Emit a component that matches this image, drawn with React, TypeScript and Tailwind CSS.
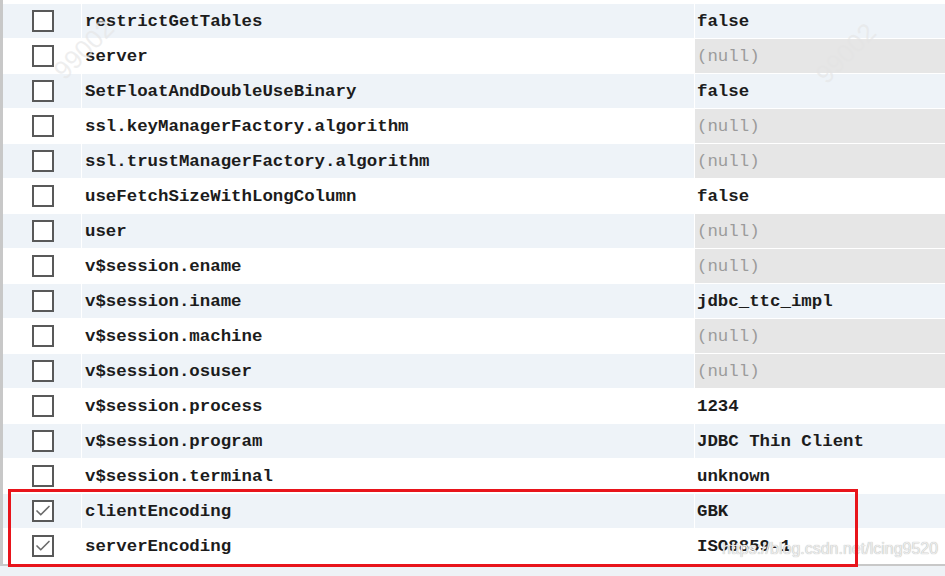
import { Check } from "lucide-react";

interface Prop {
  name: string;
  value: string | null;
  checked?: boolean;
}

const props: Prop[] = [
  { name: "restrictGetTables", value: "false" },
  { name: "server", value: null },
  { name: "SetFloatAndDoubleUseBinary", value: "false" },
  { name: "ssl.keyManagerFactory.algorithm", value: null },
  { name: "ssl.trustManagerFactory.algorithm", value: null },
  { name: "useFetchSizeWithLongColumn", value: "false" },
  { name: "user", value: null },
  { name: "v$session.ename", value: null },
  { name: "v$session.iname", value: "jdbc_ttc_impl" },
  { name: "v$session.machine", value: null },
  { name: "v$session.osuser", value: null },
  { name: "v$session.process", value: "1234" },
  { name: "v$session.program", value: "JDBC Thin Client" },
  { name: "v$session.terminal", value: "unknown" },
  { name: "clientEncoding", value: "GBK", checked: true },
  { name: "serverEncoding", value: "ISO8859-1", checked: true },
];

const mono = { fontFamily: '"Liberation Mono", "DejaVu Sans Mono", monospace' };

function Checkbox({ checked }: { checked?: boolean }) {
  return (
    <div className="w-[22px] h-[22px] border-2 border-[#595959] bg-white flex items-center justify-center">
      {checked && <Check size={18} strokeWidth={2.2} className="text-[#6b6b6b]" />}
    </div>
  );
}

export default function App() {
  return (
    <div className="relative w-[945px] h-[576px] overflow-hidden bg-[#eef2f6]">
      <div className="flex flex-col w-full border-l-[3px] border-b-2 border-[#c8c8c8] bg-white pt-[4px]">
        {props.map((p, i) => {
          const rowBg = i % 2 === 0 ? "bg-[#eef3f8]" : "bg-white";
          return (
            <div key={p.name} className="flex h-[35px] gap-px border-b border-white bg-white">
              <div className={`w-[78px] flex items-center pl-[29px] ${rowBg}`}>
                <Checkbox checked={p.checked} />
              </div>
              <div
                className={`w-[612px] flex items-center pl-[3px] pt-[3px] text-[17.4px] font-bold text-[#1c1c1c] ${rowBg}`}
                style={mono}
              >
                {p.name}
              </div>
              <div
                className={`flex-1 flex items-center pl-[2px] pt-[3px] text-[17.4px] ${
                  p.value === null ? "bg-[#e6e6e6] text-[#9b9b9b]" : `${rowBg} font-bold text-[#1c1c1c]`
                }`}
                style={mono}
              >
                {p.value === null ? "(null)" : p.value}
              </div>
            </div>
          );
        })}
      </div>

      {/* watermarks */}
      <div
        className="absolute left-[48px] top-[30px] -rotate-45 text-[26px] text-[#e4e4e4]/60 pointer-events-none select-none"
        style={{ fontFamily: '"Liberation Sans", sans-serif' }}
      >
        99002
      </div>
      <div
        className="absolute left-[810px] top-[34px] -rotate-45 text-[26px] text-[#e4e4e4]/60 pointer-events-none select-none"
        style={{ fontFamily: '"Liberation Sans", sans-serif' }}
      >
        99002
      </div>
      <div
        className="absolute left-[722px] top-[537px] text-[16px] text-[#ececec] pointer-events-none select-none"
        style={{ fontFamily: '"Liberation Sans", sans-serif', textShadow: "0 0 1px #a0a0a0" }}
      >
        https://blog.csdn.net/lcing9520
      </div>

      {/* highlight box */}
      <div className="absolute left-[8px] top-[489px] w-[850px] h-[78px] border-[3px] border-[#e8141b] pointer-events-none" />
    </div>
  );
}
